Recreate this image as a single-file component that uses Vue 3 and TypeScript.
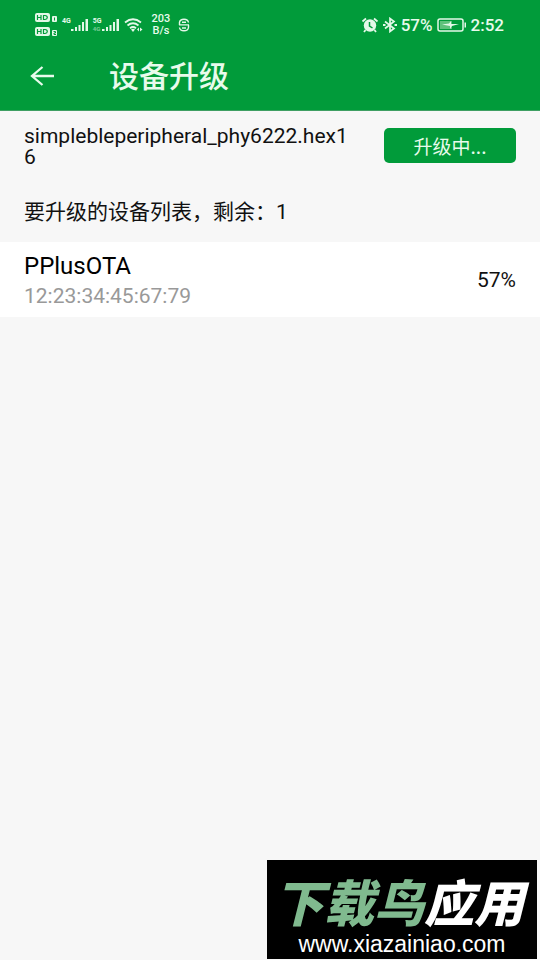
<script setup lang="ts">
import { ref } from 'vue'

interface Device {
  name: string
  address: string
  progress: number
}

const fileName = ref('simplebleperipheral_phy6222.hex16')
const devices = ref<Device[]>([
  { name: 'PPlusOTA', address: '12:23:34:45:67:79', progress: 57 },
])
const battery = 57
</script>

<template>
  <div class="screen">
    <header class="top">
      <div class="status">
        <div class="status-side">
          <svg class="hd" width="24" height="26" viewBox="0 0 24 26">
            <g fill="#e4f8e8">
              <rect x="1" y="1" width="15" height="9" rx="2" />
              <rect x="18" y="4" width="5" height="6" rx="1" />
              <rect x="1" y="15" width="15" height="9" rx="2" />
              <rect x="18" y="18" width="5" height="6" rx="1" />
            </g>
            <g fill="none" stroke="#019b3a" stroke-width="1.2">
              <path d="M3.500 3v5M7 3v5M3.500 5.500H7M9.500 3.500v4h1.500q2.300-.3 2.300-2t-2.300-2zM3.500 17v5M7 17v5M3.500 19.500H7M9.500 17.500v4h1.500q2.300-.3 2.300-2t-2.300-2z" />
              <path stroke-width="1" d="M20.500 5.500v3M19.500 19.500h2v1.500h-1.500v1.500h2" />
            </g>
          </svg>
          <div class="signal">
            <span class="net">4G</span>
            <svg width="18" height="14" viewBox="0 0 18 14" fill="#e4f8e8">
              <path d="M0 11h2.500v2H0zM4 9h2v4H4zM7.500 7h2v6h-2zM11 4h2v9h-2zM14.500 1H17v12h-2.500z" />
            </svg>
          </div>
          <div class="signal">
            <span class="net">5G<small>4G</small></span>
            <svg width="18" height="14" viewBox="0 0 18 14" fill="#e4f8e8">
              <path d="M0 11h2.500v2H0zM4 9h2v4H4zM7.500 7h2v6h-2zM11 4h2v9h-2zM14.500 1H17v12h-2.500z" />
            </svg>
          </div>
          <svg width="20" height="16" viewBox="0 0 20 16">
            <path d="M1 5.500q8-6.500 16 0M3.500 8.500q5.500-4.500 11 0M6 11.300q3-2.500 6 0" fill="none" stroke="#e4f8e8" stroke-width="1.800" />
            <path d="M7 12.500q2-1.500 4 0l-2 2.500zM13 12.500l2-2v4zM16 10.500l2.500 2-2.500 2z" fill="#e4f8e8" />
          </svg>
          <div class="speed"><span>203</span><span>B/s</span></div>
          <svg class="skype" width="12" height="14" viewBox="0 0 12 14" fill="none" stroke="#e4f8e8" stroke-width="1.400">
            <path d="M10.500 4.500Q10 1.200 6 1.200T1.500 4.300V6.900M1 6.900h10M10.500 6.900v2.600Q10 12.800 6 12.800T1.500 9.500M4 4.200h4M4 10h4" />
          </svg>
        </div>
        <div class="status-side right">
          <svg width="18" height="16" viewBox="0 0 18 16">
            <circle cx="9" cy="8.500" r="6.200" fill="#e4f8e8" />
            <path d="M1.500 4.500L5 1.500M16.500 4.500L13 1.500M4.500 13L3 15M13.500 13l1.500 2" stroke="#e4f8e8" stroke-width="1.800" />
            <path d="M8.500 5v4l3 2" fill="none" stroke="#019b3a" stroke-width="1.500" />
          </svg>
          <svg width="14" height="16" viewBox="0 0 14 16">
            <path d="M2 4.500l9 7-4 3v-13l4 3-9 7" fill="none" stroke="#e4f8e8" stroke-width="1.700" />
            <path d="M0 7h2.500v2H0zM11.500 7H14v2h-2.500z" fill="#e4f8e8" />
          </svg>
          <span>{{ battery }}%</span>
          <svg width="30" height="14" viewBox="0 0 30 14">
            <rect x="1" y="1" width="25" height="12" rx="2" fill="none" stroke="#e4f8e8" stroke-width="1.500" />
            <rect x="3" y="3" width="12" height="8" fill="#5fc27c" />
            <path d="M5 6.500l7-1 2-2.500v3h8l-7 2-2 3V8z" fill="#e4f8e8" />
            <path d="M27.500 4.500H29v5h-1.500z" fill="#e4f8e8" />
          </svg>
          <span>2:52</span>
        </div>
      </div>
      <div class="bar">
        <button class="back" type="button" aria-label="返回">
          <svg width="24" height="20" viewBox="0 0 24 20" fill="none" stroke="#e8fbec" stroke-width="2.300">
            <path d="M24 10H2M12.500 1L2 10l10.500 9" />
          </svg>
        </button>
        <h1>设备升级</h1>
      </div>
    </header>

    <main>
      <section class="file">
        <p class="file-name">{{ fileName }}</p>
        <button class="upgrade" type="button">升级中...</button>
      </section>
      <h2>要升级的设备列表，剩余：{{ devices.length }}</h2>
      <ul>
        <li v-for="device in devices" :key="device.address">
          <div>
            <p class="name">{{ device.name }}</p>
            <p class="address">{{ device.address }}</p>
          </div>
          <span class="percent">{{ device.progress }}%</span>
        </li>
      </ul>
    </main>

    <aside class="mark">
      <p class="brand"><span>下载鸟</span>应用</p>
      <p class="site">www.xiazainiao.com</p>
    </aside>
  </div>
</template>

<style>
body {
  background: #f7f7f7;
}
</style>

<style scoped>
.screen {
  position: relative;
  min-height: 100vh;
  background: #f7f7f7;
  color: #111;
  font-family: Roboto, "Noto Sans CJK SC", sans-serif;
}
p, h1, h2, ul {
  margin: 0;
  padding: 0;
}
svg {
  display: block;
  flex: none;
}
.top {
  background: #019b3a;
  border-bottom: 1px solid #3f9f63;
  color: #e8fbec;
}
.status {
  display: flex;
  justify-content: space-between;
  align-items: center;
  height: 50px;
  padding: 0 36px 0 34px;
}
.status-side {
  display: flex;
  align-items: center;
  gap: 4px;
}
.right {
  font-size: 17px;
  font-weight: 500;
}
.signal {
  display: flex;
  align-items: center;
}
.net {
  display: flex;
  flex-direction: column;
  height: 16px;
  font-size: 7px;
  line-height: 8px;
  font-weight: 700;
}
.net small {
  font-size: 6px;
  opacity: 0.5;
}
.speed {
  display: flex;
  flex-direction: column;
  align-items: center;
  margin-left: 4px;
  font-size: 11px;
  line-height: 12px;
  font-weight: 500;
}
.skype {
  margin-left: 4px;
}
.bar {
  display: flex;
  align-items: center;
  height: 60px;
  padding: 0 30px 8px;
  box-sizing: border-box;
  gap: 55px;
}
.back {
  padding: 0;
  border: 0;
  background: none;
}
h1 {
  padding-bottom: 4px;
  font: 500 30px/40px "Noto Sans CJK SC", sans-serif;
}
.file {
  display: flex;
  align-items: flex-start;
  justify-content: space-between;
  gap: 32px;
  padding: 15px 24px 0;
}
.file-name {
  flex: 1;
  font-size: 21px;
  line-height: 21px;
  word-break: break-all;
}
.upgrade {
  width: 132px;
  height: 35px;
  margin-top: 2px;
  padding: 0;
  border: 0;
  border-radius: 5px;
  background: #019b3a;
  color: #e8fbec;
  font: 400 19px/28px "Noto Sans CJK SC", sans-serif;
}
h2 {
  padding: 30px 24px 16px;
  font-size: 21px;
  line-height: 28px;
  font-weight: 400;
}
ul {
  list-style: none;
}
li {
  display: flex;
  align-items: center;
  justify-content: space-between;
  padding: 8px 24px 7px;
  background: #fff;
}
.name {
  font-size: 24px;
  line-height: 32px;
  color: #000;
}
.address {
  font-size: 21px;
  line-height: 28px;
  color: #999;
}
.percent {
  font-size: 21px;
}
.mark {
  position: absolute;
  right: 3px;
  bottom: 1px;
  width: 270px;
  height: 99px;
  background: #000;
  color: #fff;
  text-align: center;
  white-space: nowrap;
}
.brand {
  padding: 8px 6px 0 0;
  font: italic 900 50px/64px "Noto Sans CJK SC", sans-serif;
}
.brand span {
  color: #80ba8f;
}
.site {
  font: 23px/24px "Liberation Sans", sans-serif;
}
</style>
